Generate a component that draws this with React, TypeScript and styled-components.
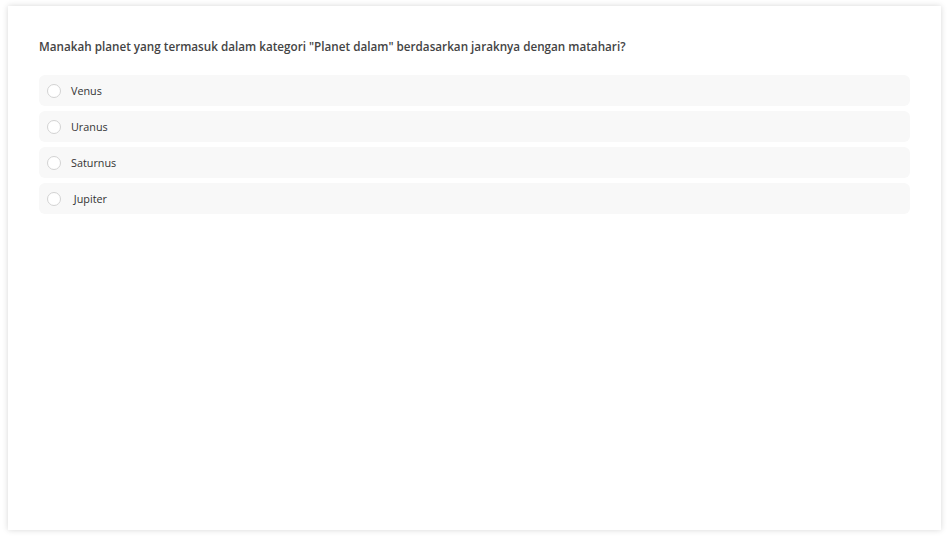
import React from "react";
import styled, { createGlobalStyle } from "styled-components";

const Global = createGlobalStyle`
  html, body { margin: 0; padding: 0; background: #ffffff; }
  body { font-family: "Open Sans", "Noto Sans", sans-serif; }
`;

const Page = styled.div`
  padding: 6px 8px 11px 8px;
`;

const Card = styled.div`
  height: 524px;
  box-sizing: border-box;
  background: #fff;
  box-shadow: 0 0 6px rgba(0, 0, 0, 0.16);
  padding: 31px 31px 0 31px;
`;

const Question = styled.div`
  font-size: 11.7px;
  font-weight: 600;
  color: #444444;
  line-height: 18px;
  margin-bottom: 20px;
`;

const Options = styled.div`
  display: flex;
  flex-direction: column;
  gap: 5px;
`;

const Option = styled.label`
  display: flex;
  align-items: center;
  height: 31px;
  border-radius: 6px;
  background: #f8f8f8;
  padding-left: 8px;
  box-sizing: border-box;
  cursor: pointer;
`;

const Radio = styled.span`
  width: 14px;
  height: 14px;
  box-sizing: border-box;
  border-radius: 50%;
  border: 1px solid #d3d3d3;
  background: #fff;
  flex: none;
`;

const Label = styled.span`
  margin-left: 10px;
  font-size: 10.8px;
  color: #333;
  white-space: pre;
`;

const options = ["Venus", "Uranus", "Saturnus", " Jupiter"];

export default function App() {
  return (
    <>
      <Global />
      <Page>
        <Card>
          <Question>
            Manakah planet yang termasuk dalam kategori "Planet dalam" berdasarkan jaraknya dengan matahari?
          </Question>
          <Options>
            {options.map((o) => (
              <Option key={o}>
                <Radio />
                <Label>{o}</Label>
              </Option>
            ))}
          </Options>
        </Card>
      </Page>
    </>
  );
}
